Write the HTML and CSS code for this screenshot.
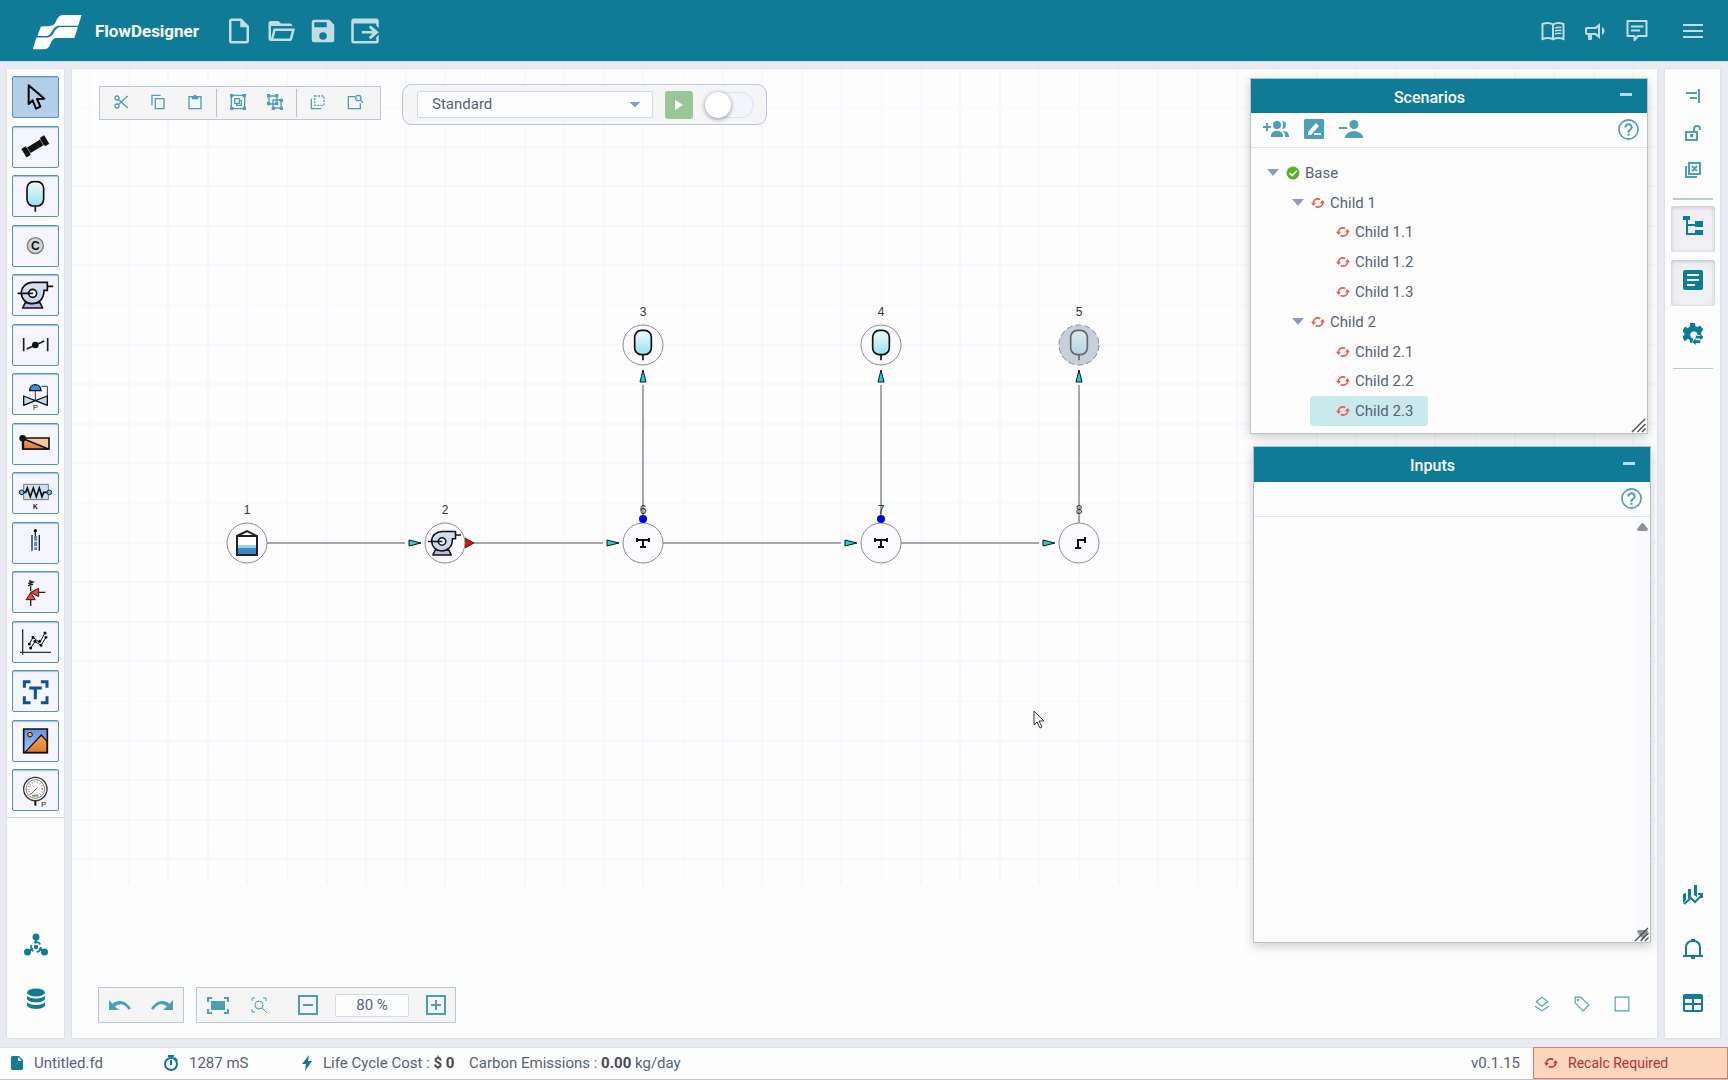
FILE: index.html
```html
<!DOCTYPE html>
<html lang="en">
<head>
<meta charset="utf-8">
<meta name="viewport" content="width=device-width, initial-scale=1">
<title>FlowDesigner</title>
<link rel="stylesheet" href="styles.css">
</head>
<body>
<svg class="sprite" aria-hidden="true">
  <defs>
    <linearGradient id="water" x1="0" y1="0" x2="0" y2="1"><stop offset="0" stop-color="#f2fcfd"/><stop offset="1" stop-color="#96e2ec"/></linearGradient>
    <linearGradient id="steel" x1="0" y1="0" x2="0" y2="1"><stop offset="0" stop-color="#d5e2f5"/><stop offset="1" stop-color="#c4d4ec"/></linearGradient>
    <linearGradient id="orange" x1="0" y1="0" x2="0" y2="1"><stop offset="0" stop-color="#f3a55c"/><stop offset="1" stop-color="#e0792a"/></linearGradient>
    <linearGradient id="sky" x1="0" y1="0" x2="0" y2="1"><stop offset="0" stop-color="#5f92e8"/><stop offset="1" stop-color="#a9c8f6"/></linearGradient>
  </defs>
  <symbol id="recalc" viewBox="0 0 24 24"><g fill="none" stroke="currentColor" stroke-width="2.8"><path d="M4 12.5C4 8 7.500 5 12 5c1.500 0 2.500.3 4 1"/><path d="M20 11.500C20 16 16.500 19 12 19c-1.500 0-2.500-.3-4-1"/></g><path fill="currentColor" d="M0 11.500h8.500L4.300 17zM15.500 12.500H24L19.700 7z"/></symbol>
  <symbol id="caret" viewBox="0 0 12 7"><path fill="#8b9dbd" d="M0 0h12L6 7z"/></symbol>
  <symbol id="help" viewBox="0 0 24 24"><path fill="currentColor" d="M11 18h2v-2h-2v2m1-16A10 10 0 0 0 2 12a10 10 0 0 0 10 10 10 10 0 0 0 10-10A10 10 0 0 0 12 2m0 18.400A8.400 8.400 0 1 1 20.400 12 8.400 8.400 0 0 1 12 20.400M12 6a4 4 0 0 0-4 4h2a2 2 0 0 1 2-2 2 2 0 0 1 2 2c0 2-3 1.750-3 5h2c0-2.250 3-2.500 3-5a4 4 0 0 0-4-4z"/></symbol>
  <symbol id="resize" viewBox="0 0 16 16"><path stroke="#4b4d55" stroke-width="1.400" d="M1 15L14 2M6.500 15L14.500 7M11 15l3.500-3.500"/></symbol>
  <symbol id="vessel" viewBox="0 0 60 96"><path stroke="#111" stroke-width="5" d="M30 76v18"/><rect x="5" y="4" width="50" height="73" rx="20" fill="url(#water)" stroke="#111" stroke-width="5"/></symbol>
  <symbol id="pump" viewBox="0 0 108 86"><path d="M24 66L16 82h60l-8-16z" fill="#bcb9ea" stroke="#111" stroke-width="5" stroke-linejoin="round"/><path d="M46 5h44v24H80C80 58 62 69 44 69A32 32 0 0 1 12 37C12 18 28 5 46 5z" fill="url(#steel)" stroke="#111" stroke-width="5"/><path d="M0 38h46M90 17h18" stroke="#111" stroke-width="5"/><circle cx="46" cy="38" r="12" fill="#fff" stroke="#111" stroke-width="5"/><path d="M30 38h17" stroke="#111" stroke-width="5"/></symbol>
  <symbol id="tee" viewBox="-14 -14 28 28"><path d="M-6-3H6M-6-5v4M6-5v4M0-3V4M-3 4h6" stroke="#111" stroke-width="2" fill="none"/></symbol>
</svg>

<header class="topbar">
  <svg class="logo" viewBox="95 42 155 110" aria-hidden="true"><path fill="#fff" d="M246 45H188C176 46 172 56 166 68C162 76 158 80 122 80L111 109H138C154 108 154 92 164 83C169 79 174 78 182 78H236ZM235 82H184C172 82 168 88 162 98C156 110 150 114 138 114H108L97 150H130C146 149 148 140 154 126C160 116 164 115 172 115H224Z"/></svg>
  <h1 class="brand">FlowDesigner</h1>
  <nav class="file-actions" aria-label="File">
    <button aria-label="New"><svg viewBox="0 0 24 24"><path d="M14 2H6C4.890 2 4 2.900 4 4V20C4 21.110 4.890 22 6 22H18C19.100 22 20 21.100 20 20V8L14 2M18 20H6V4H13V9H18V20Z"/></svg></button>
    <button aria-label="Open"><svg viewBox="0 0 24 24"><path d="M6.100,10L4,18V8H21A2,2 0 0,0 19,6H12L10,4H4A2,2 0 0,0 2,6V18A2,2 0 0,0 4,20H19C19.900,20 20.700,19.400 20.900,18.500L23.200,10H6.100M19,18H6L7.600,12H20.600L19,18Z"/></svg></button>
    <button aria-label="Save"><svg viewBox="0 0 24 24"><path d="M15,9H5V5H15M12,19A3,3 0 0,1 9,16A3,3 0 0,1 12,13A3,3 0 0,1 15,16A3,3 0 0,1 12,19M17,3H5C3.890,3 3,3.900 3,5V19A2,2 0 0,0 5,21H19A2,2 0 0,0 21,19V7L17,3Z"/></svg></button>
    <button aria-label="Export"><svg viewBox="0 0 24 24"><path d="M3 2h18a2 2 0 0 1 2 2v5.500l-2-2V6H3V20H21V17l2-2v5a2 2 0 0 1-2 2H3a2 2 0 0 1-2-2V4a2 2 0 0 1 2-2z"/><path d="M16.500 7.500L23 13l-6.500 5.500L15 17l3-3H9.500v-2H18l-3-3z"/></svg></button>
  </nav>
  <nav class="app-actions" aria-label="Application">
    <button aria-label="Manual"><svg viewBox="0 0 24 24"><path fill="none" stroke="currentColor" stroke-width="2" d="M12 5.500C9 3.800 5 3.800 1.500 5v15C5 18.800 9 18.800 12 20.300 15 18.800 19 18.800 22.500 20V5C19 3.800 15 3.800 12 5.500zV20"/><path stroke="currentColor" stroke-width="1.500" d="M14 9c2-1 4-1 6.500-.5M14 12c2-1 4-1 6.500-.5M14 15c2-1 4-1 6.500-.5"/></svg></button>
    <button aria-label="News"><svg viewBox="0 0 24 24"><path d="M12,8H4A2,2 0 0,0 2,10V14A2,2 0 0,0 4,16H5V20A1,1 0 0,0 6,21H8A1,1 0 0,0 9,20V16H12L17,20V4L12,8M15,15.600L13,14H4V10H13L15,8.400V15.600M21.500,12C21.500,13.710 20.540,15.260 19,16V8C20.530,8.750 21.500,10.300 21.500,12Z"/></svg></button>
    <button aria-label="Feedback"><svg viewBox="0 0 24 24"><path fill="none" stroke="currentColor" stroke-width="2" stroke-linejoin="round" d="M2.500 2h19v15H13l-3.500 4V17h-7z"/><path stroke="currentColor" stroke-width="2" d="M6 7.500h12.500M6 11.500h9"/></svg></button>
    <button class="menu-button" aria-label="Menu"><svg viewBox="0 0 24 24"><path d="M2,5H22V7H2V5M2,11H22V13H2V11M2,17H22V19H2V17Z"/></svg></button>
  </nav>
</header>

<main class="workspace">
  <aside class="palette">
    <div class="tools">
      <button class="tool active" aria-label="Select"><svg viewBox="3 3 135 123"><path d="M50 28V84L62 73 72 98 85 92 75 69 97 68Z" fill="none" stroke="#000" stroke-width="6" stroke-linejoin="round"/></svg></button>
      <button class="tool" aria-label="Pipe"><svg viewBox="3 3 135 123"><g transform="rotate(-31 70 64)"><path d="M40 54h60v20H40z"/><path d="M31 50h13v28H31zM96 50h13v28H96z" stroke="#111" stroke-width="2"/><path d="M47 50v28M93 50v28" stroke="#aab" stroke-width="2"/></g></svg></button>
      <button class="tool" aria-label="Vessel"><svg viewBox="3 3 135 123"><use href="#vessel" x="40" y="16" width="60" height="96"/></svg></button>
      <button class="tool" aria-label="Component"><svg viewBox="3 3 135 123"><circle cx="70" cy="65" r="24" fill="#d3d3d5" stroke="#777" stroke-width="4"/><text x="70" y="78" class="glyph-c">C</text></svg></button>
      <button class="tool" aria-label="Pump"><svg viewBox="3 3 135 123"><use href="#pump" x="16" y="20" width="108" height="86"/></svg></button>
      <button class="tool" aria-label="Valve"><svg viewBox="3 3 135 123"><path d="M35 45v40M107 45v40M44 78L97 54" stroke="#222" stroke-width="5"/><circle cx="70" cy="66" r="10"/></svg></button>
      <button class="tool" aria-label="Control valve"><svg viewBox="3 3 135 123"><path d="M88 40h18v40M70 52v31" fill="none" stroke="#333" stroke-width="3"/><path d="M53 53c0-24 34-24 34 0z" fill="#2f93e0" stroke="#111" stroke-width="4"/><path d="M35 69L70 83 35 97zM106 69L70 83l36 14z" fill="#c3d9ef" stroke="#111" stroke-width="4" stroke-linejoin="round"/><text x="70" y="111" class="glyph-p">P</text></svg></button>
      <button class="tool" aria-label="Weir"><svg viewBox="3 3 135 123"><path d="M32 48h79v33H32z" fill="#f7c8a0" stroke="#111" stroke-width="5"/><path d="M34 50L109 81H34z" fill="url(#orange)" stroke="#111" stroke-width="5"/><circle cx="32" cy="49" r="10"/></svg></button>
      <button class="tool" aria-label="Resistance"><svg viewBox="3 3 135 123"><path d="M35 37h74v46H35z" fill="#cfe0f2" stroke="#777" stroke-width="3"/><path d="M29 61h12l5-13 9 26 9-26 9 26 9-26 8 26 5-13h17" fill="none" stroke="#111" stroke-width="5"/><circle cx="29" cy="61" r="7" fill="#5cc3ee" stroke="#124" stroke-width="3"/><circle cx="112" cy="61" r="7" fill="#5cc3ee" stroke="#124" stroke-width="3"/><text x="70" y="111" class="glyph-k">K</text></svg></button>
      <button class="tool" aria-label="Orifice"><svg viewBox="3 3 135 123"><path d="M60 42v47M82 42v47M70 28v24" stroke="#222" stroke-width="4"/><circle cx="70" cy="29" r="5"/><path d="M71 45v42" stroke="#5b82d8" stroke-width="9" stroke-dasharray="14 3"/></svg></button>
      <button class="tool" aria-label="Relief valve"><svg viewBox="3 3 135 123"><path d="M56 60V46M48 44l15-4-14-3 14-4-12-4M80 64h20M56 84v21" fill="none" stroke="#222" stroke-width="4"/><path d="M56 65L42 86h28zM56 64l24-12v25z" fill="#e24a3c" stroke="#511" stroke-width="3"/></svg></button>
      <button class="tool" aria-label="Graph"><svg viewBox="3 3 135 123"><path d="M32 28v76M24 97h93" stroke="#333" stroke-width="4"/><path d="M52 72l11-20 20 16 16-29M56 84l13-19 18 11 15-24" fill="none" stroke="#111" stroke-width="3"/><path d="M52 72h0M63 52h0M83 64h0M99 39h0M56 84h0M69 64h0M87 76h0M102 52h0" stroke="#111" stroke-width="9" stroke-linecap="round"/></svg></button>
      <button class="tool" aria-label="Text"><svg viewBox="3 3 135 123"><path d="M37 49V35h14M91 35h14v14M105 83v15H91M51 98H37V83M56 54h29M70 54v29" fill="none" stroke="#0e50a0" stroke-width="9" stroke-linecap="square"/></svg></button>
      <button class="tool" aria-label="Image"><svg viewBox="3 3 135 123"><path d="M35 30h71v71H35z" fill="url(#sky)"/><path d="M38 101L88 48l18 20v33z" fill="url(#orange)" stroke="#111" stroke-width="4"/><circle cx="54" cy="47" r="7" fill="#f9b31a" stroke="#111" stroke-width="3"/><path d="M35 30h71v71H35z" fill="none" stroke="#111" stroke-width="5"/></svg></button>
      <button class="tool" aria-label="Gauge"><svg viewBox="3 3 135 123"><path d="M70 96v14" stroke="#111" stroke-width="6"/><circle cx="70" cy="60" r="35" fill="#fff" stroke="#333" stroke-width="4"/><circle cx="70" cy="60" r="28" fill="none" stroke="#444" stroke-width="2"/><circle cx="70" cy="60" r="21" fill="none" stroke="#777" stroke-width="6" stroke-dasharray="2 6"/><path d="M56 76L76 56" stroke="#c33" stroke-width="3"/><path d="M61 80h18" stroke="#6a6" stroke-width="6"/><text x="95" y="114" class="glyph-p">P</text></svg></button>
    </div>
    <div class="palette-bottom">
      <button aria-label="Fluids"><svg viewBox="0 0 24 24"><circle cx="12" cy="4" r="3.500"/><circle cx="3.500" cy="19" r="3.500"/><circle cx="20.500" cy="19" r="3.500"/><circle cx="12" cy="14" r="2.200"/><path d="M11 6h2v4.500h-2zM4 17.200l4.500-2.600 1 1.700L5 19zM20 17.200l-4.500-2.600-1 1.700L19 19z"/><circle cx="12" cy="14" r="5" fill="none" stroke="currentColor" stroke-width="1.700" stroke-dasharray="7 3.500"/></svg></button>
      <button aria-label="Database"><svg viewBox="0 0 24 24"><ellipse cx="12" cy="5.500" rx="9" ry="4"/><path d="M3 8.500c2 4 16 4 18 0v3.500c-2 4.500-16 4.500-18 0zM3 15c2 4 16 4 18 0v3.500c-2 4.500-16 4.500-18 0z"/></svg></button>
    </div>
  </aside>

  <section class="canvas" aria-label="Design sheet">
    <svg class="diagram" aria-hidden="true">
      <defs>
        <pattern id="grid" x="17" y="38" width="198" height="198" patternUnits="userSpaceOnUse"><path d="M0 0h198M0 40h198M0 79h198M0 119h198M0 158h198M0 0v198M40 0v198M79 0v198M119 0v198M158 0v198" fill="none" stroke="#f8f8fc" stroke-width="2"/></pattern>
      </defs>
      <rect width="100%" height="816" fill="url(#grid)"/>
      <g class="links">
        <path d="M195 474H333M393 474H531M591 474H769M829 474H967M571 454V316M809 454V316M1007 454V316"/>
      </g>
      <g class="arrows">
        <path d="M337 471l12 3-12 3zM535 471l12 3-12 3zM773 471l12 3-12 3zM971 471l12 3-12 3zM568 313l3-12 3 12zM806 313l3-12 3 12zM1004 313l3-12 3 12z"/>
      </g>
      <path d="M393 469l9 5-9 5z" fill="#d01515" stroke="#611" stroke-width="1"/>
      <g class="nodes">
        <circle cx="175" cy="474" r="20"/><circle cx="373" cy="474" r="20"/><circle cx="571" cy="474" r="20"/><circle cx="809" cy="474" r="20"/><circle cx="1007" cy="474" r="20"/>
        <circle cx="571" cy="276" r="20"/><circle cx="809" cy="276" r="20"/><circle class="selected" cx="1007" cy="276" r="20"/>
      </g>
      <path d="M165 467l10-5 10 5v19h-20z" fill="#fff"/><path d="M165 476h20v4h-20z" fill="#98cfe8"/><path d="M165 479h20v7h-20z" fill="#3a85cc"/>
      <path d="M165 467l10-5 10 5v19h-20zM165 467h20" fill="none" stroke="#222" stroke-width="2"/>
      <use href="#pump" x="356" y="460" width="33" height="28"/>
      <use href="#tee" x="557" y="460" width="28" height="28"/><use href="#tee" x="795" y="460" width="28" height="28"/>
      <path d="M1006 479v-8h7M1013 468v6M1003 479h6" fill="none" stroke="#111" stroke-width="2"/>
      <use href="#vessel" x="561" y="260" width="20" height="32"/><use href="#vessel" x="799" y="260" width="20" height="32"/><use href="#vessel" x="997" y="260" width="20" height="32" opacity=".55"/>
      <circle cx="571" cy="450" r="4" fill="#0202e8"/><circle cx="809" cy="450" r="4" fill="#0202e8"/>
      <g class="labels">
        <text x="175" y="445">1</text><text x="373" y="445">2</text><text x="571" y="247">3</text><text x="809" y="247">4</text><text x="1007" y="247">5</text><text x="571" y="445">6</text><text x="809" y="445">7</text><text x="1007" y="445">8</text>
      </g>
      <path d="M962 642v14l3-3 3 6 2-1-3-6h5z" fill="#fff" stroke="#333" stroke-width="1"/>
    </svg>

    <div class="float edit-bar">
      <button aria-label="Cut"><svg viewBox="0 0 24 24"><g class="line"><circle cx="6" cy="6" r="3"/><circle cx="6" cy="18" r="3"/><path d="M8 8l14 13M8 16L22 3"/></g></svg></button>
      <button aria-label="Copy"><svg viewBox="0 0 24 24"><path class="line" d="M8 7h13v15H8zM3 17V2h13"/></svg></button>
      <button aria-label="Paste"><svg viewBox="0 0 24 24"><path class="line" d="M3 4h18v18H3z"/><path d="M7 3h3a2 2 0 0 1 4 0h3v5H7z"/></svg></button>
      <span class="sep"></span>
      <button aria-label="Group"><svg viewBox="0 0 24 24"><path class="line" d="M2 2h20v20H2zM7 7h7v7H7zM14 10h3v7h-7v-3"/><path d="M0 0h5v5H0zM19 0h5v5h-5zM0 19h5v5H0zM19 19h5v5h-5z"/></svg></button>
      <button aria-label="Ungroup"><svg viewBox="0 0 24 24"><path class="line" d="M3 3h12v12H3zM9 9h12v12H9z"/><path d="M0 0h5v5H0zM12 0h5v5h-5zM0 12h5v5H0zM12 12h5v5h-5zM19 7h5v5h-5zM7 19h5v5H7zM19 19h5v5h-5z"/></svg></button>
      <span class="sep"></span>
      <button aria-label="Select area"><svg viewBox="0 0 24 24"><path class="line" stroke-dasharray="3 2" d="M7 3h14v14H7z"/><path class="line" d="M2 7v15h15"/></svg></button>
      <button aria-label="Find on sheet"><svg viewBox="0 0 24 24"><path class="line" d="M12 4H2v18h18v-8"/><circle class="line" cx="17" cy="6" r="4"/><path class="line" d="M20 9l4 4"/></svg></button>
    </div>

    <div class="float run-bar">
      <select class="mode" aria-label="Calculation mode"><option>Standard</option></select>
      <button class="run" aria-label="Run"><svg viewBox="0 0 9 12"><path d="M0 0l9 6-9 6z"/></svg></button>
      <input type="checkbox" class="switch" aria-label="Auto calculate">
    </div>

    <section class="float window scenarios">
      <header class="window-title"><h2>Scenarios</h2><button class="minimize" aria-label="Minimize scenarios"></button></header>
      <div class="window-bar">
        <button aria-label="Add scenario"><svg class="wide" viewBox="0 0 26 18"><path d="M0 6h3V3h2v3h3v2H5v3H3V8H0z"/><circle cx="14" cy="5" r="4"/><path d="M8 16c0-7 12-7 12 0v1H8zM19 1a4 4 0 0 1 0 8c1.500-2 1.500-6 0-8zM20 11c4 0 6 2 6 6h-4c0-3 0-4-2-6z"/></svg></button>
        <button aria-label="Edit scenario"><svg class="mid" viewBox="0 0 20 20"><path fill-rule="evenodd" d="M1.500 0h17A1.500 1.500 0 0 1 20 1.500v17a1.500 1.500 0 0 1-1.500 1.500h-17A1.500 1.500 0 0 1 0 18.500v-17A1.500 1.500 0 0 1 1.500 0zM4 13v3h3l8-9-3-3zM10 14v2h7v-2z"/></svg></button>
        <button aria-label="Remove scenario"><svg class="wide" viewBox="0 0 26 18"><path d="M0 7h8v2H0z"/><circle cx="15" cy="4.500" r="4.500"/><path d="M6 18c0-9 18-9 18 0z"/></svg></button>
        <button class="help-button" aria-label="Scenarios help"><svg><use href="#help"/></svg></button>
      </div>
      <ul class="tree">
        <li class="level-0"><svg class="caret"><use href="#caret"/></svg><svg class="state" viewBox="0 0 24 24"><circle cx="12" cy="12" r="11" fill="#55b322"/><path d="M6 12l4.500 4.500 8-8.500" fill="none" stroke="#fff" stroke-width="2.500"/></svg>Base</li>
        <li class="level-1"><svg class="caret"><use href="#caret"/></svg><svg class="state"><use href="#recalc"/></svg>Child 1</li>
        <li class="level-2"><svg class="state"><use href="#recalc"/></svg>Child 1.1</li>
        <li class="level-2"><svg class="state"><use href="#recalc"/></svg>Child 1.2</li>
        <li class="level-2"><svg class="state"><use href="#recalc"/></svg>Child 1.3</li>
        <li class="level-1"><svg class="caret"><use href="#caret"/></svg><svg class="state"><use href="#recalc"/></svg>Child 2</li>
        <li class="level-2"><svg class="state"><use href="#recalc"/></svg>Child 2.1</li>
        <li class="level-2"><svg class="state"><use href="#recalc"/></svg>Child 2.2</li>
        <li class="level-2 current"><svg class="state"><use href="#recalc"/></svg>Child 2.3</li>
      </ul>
      <svg class="resize"><use href="#resize"/></svg>
    </section>

    <section class="float window inputs">
      <header class="window-title"><h2>Inputs</h2><button class="minimize" aria-label="Minimize inputs"></button></header>
      <div class="window-bar"><button class="help-button" aria-label="Inputs help"><svg><use href="#help"/></svg></button></div>
      <div class="inputs-body"><div class="scroll-track"><svg viewBox="0 0 11 8"><path d="M4 1Q5.500-1 7 1L11 6Q11 8 9 8H2Q0 8 0 6z"/></svg><svg viewBox="0 0 11 8"><path d="M4 7Q5.500 9 7 7L11 2Q11 0 9 0H2Q0 0 0 2z"/></svg></div></div>
      <svg class="resize"><use href="#resize"/></svg>
    </section>

    <div class="float bottom-bars">
      <div class="bar history">
        <button aria-label="Undo"><svg viewBox="0 0 22 10"><path d="M0 0v10h10L6 6.500c5-4 10-2.500 13.500 3.200L22 8.500C17 .5 9-1 3.500 3.800z"/></svg></button>
        <button aria-label="Redo"><svg viewBox="0 0 22 10"><path d="M22 0v10H12l4-3.500C11 2.500 6 4 2.500 9.700L0 8.500C5 .5 13-1 18.500 3.800z"/></svg></button>
      </div>
      <div class="bar zoom">
        <button aria-label="Fit to view"><svg class="fit" viewBox="0 0 22 17"><path d="M4 4h14v9H4z"/><path class="line" d="M1 5V1h4M17 1h4v4M21 12v4h-4M5 16H1v-4"/></svg></button>
        <button class="zoom-area" aria-label="Zoom to area"><svg class="area" viewBox="0 0 17 17"><path class="thin" d="M1 4V1h3M12 1h3v3M1 12v3h3M11 11l5 5"/><circle class="thin" cx="8" cy="8" r="4"/></svg></button>
        <span class="sep"></span>
        <button class="zoom-out" aria-label="Zoom out"><svg class="step" viewBox="0 0 20 20"><path class="line" d="M1 1h18v18H1zM5 10h10"/></svg></button>
        <input class="zoom-level" type="text" value="80 %" aria-label="Zoom level">
        <button aria-label="Zoom in"><svg class="step" viewBox="0 0 20 20"><path class="line" d="M1 1h18v18H1zM5 10h10M10 5v10"/></svg></button>
      </div>
    </div>

    <div class="float view-options">
      <button aria-label="Layers"><svg viewBox="0 0 14 14"><path class="thin" d="M7 1l5 4-5 4-5-4zM1 9l6 4 6-4"/></svg></button>
      <button aria-label="Labels"><svg viewBox="0 0 14 14"><path class="thin" d="M1 1h5l7 7-5 5-7-7z"/><circle cx="3.500" cy="3.500" r="1"/></svg></button>
      <button aria-label="Frame"><svg viewBox="0 0 14 14"><path class="thin" d="M1 1h12v12H1z"/></svg></button>
    </div>
  </section>

  <aside class="side-panel">
    <div class="side-small">
      <button aria-label="Dock right"><svg viewBox="0 0 16 16"><path class="line" d="M14 1v14M1 5h11M5 10h7"/></svg></button>
      <button aria-label="Unlock"><svg viewBox="0 0 16 16"><path class="line" d="M1 7h11v8H1zM9 7V4c0-4 6-4 6 0v1"/><path d="M5 9h3v3H5z"/></svg></button>
      <button aria-label="Close all"><svg viewBox="0 0 16 16"><path class="line" d="M4 1h11v11H4zM1 4v11h11M7 4l5 5M12 4l-5 5"/></svg></button>
    </div>
    <div class="side-main">
      <button class="pressed" aria-label="Scenario tree"><svg viewBox="0 0 20 20"><path d="M0 0h7v4H0zM12 5h8v6h-8zM12 14h8v5h-8zM3 4h2v4h7v2H5v7h7v2H3z"/></svg></button>
      <button class="pressed" aria-label="Input list"><svg viewBox="0 0 20 20"><path fill-rule="evenodd" d="M2 0h16a2 2 0 0 1 2 2v16a2 2 0 0 1-2 2H2a2 2 0 0 1-2-2V2a2 2 0 0 1 2-2zM4 4v2h12V4zM4 9v2h12V9zM4 14v2h8v-2z"/></svg></button>
      <button aria-label="Settings"><svg viewBox="1 0 22 24"><path d="M9 0h5l.6 3.200 2 1L20 3l3.500 4-2.500 3v3h-4a4 4 0 1 0-5 4v4.500H9l-.6-3-2-1.200L3 20l-3-5 2.600-2v-2L0 9l3-5 3.300 1.300 2-1.200zM15 14h5v-2l4 3.500-4 3.500v-2h-5zM20 19h-5v-2l-4 3.500 4 3.500v-2h5z"/></svg></button>
    </div>
    <div class="side-bottom">
      <button aria-label="Results graph"><svg viewBox="0 0 20 20"><path d="M0 9l3-1v7l-3 3zM5 4h3v8l-3 2zM11 0h3v12l-3-2z"/><path d="M1 19l7-6 4 4 7-7M15 9h4v4" fill="none" stroke="currentColor" stroke-width="2"/></svg></button>
      <button aria-label="Alerts"><svg viewBox="0 0 20 20"><path d="M3 16V8.500C3 4 6 2 10 2s7 2 7 6.500V16M0 17h20" fill="none" stroke="currentColor" stroke-width="2"/><path d="M8 0h4v3H8zM8 18h4v2H8z"/></svg></button>
      <button aria-label="Data table"><svg viewBox="0 0 20 20"><path fill-rule="evenodd" d="M2 1h16a2 2 0 0 1 2 2v14a2 2 0 0 1-2 2H2a2 2 0 0 1-2-2V3a2 2 0 0 1 2-2zM2 6v4h7V6zM11 6v4h7V6zM2 12v5h7v-5zM11 12v5h7v-5z"/></svg></button>
    </div>
  </aside>
</main>

<footer class="status">
  <span class="status-item file"><svg viewBox="0 0 12 14"><path fill-rule="evenodd" d="M1.500 0H8l4 4v8.500a1.500 1.500 0 0 1-1.500 1.500h-9A1.500 1.500 0 0 1 0 12.500v-11A1.500 1.500 0 0 1 1.500 0zM7 1v4h4z"/></svg>Untitled.fd</span>
  <span class="status-item time"><svg viewBox="0 0 14 16"><circle class="line" cx="7" cy="9" r="6"/><path d="M4 0h6v2H4zM6 5h2v5H6zM11 2l3 3-1 1-3-3z"/></svg>1287 mS</span>
  <span class="status-item cost"><svg viewBox="0 0 10 16"><path d="M7 0L0 9h4L3 16l7-10H6z"/></svg><span>Life Cycle Cost : <b>$ 0</b></span></span>
  <span class="status-item emissions">Carbon Emissions : <b>0.00</b> kg/day</span>
  <span class="version">v0.1.15</span>
  <button class="recalc"><svg><use href="#recalc"/></svg>Recalc Required</button>
</footer>
</body>
</html>
```
FILE: styles.css
```css
:root {
  --teal: #0f7b96;
  --teal-soft: #4c9fb4;
  --text: #56617a;
  --edge: #bcc6dc;
  --sheet: #fdfdfd;
}

* { box-sizing: border-box; }

body {
  margin: 0;
  min-height: 100vh;
  display: flex;
  flex-direction: column;
  background: #e9ebf3;
  color: var(--text);
  font: 15px/20px Roboto, "Liberation Sans", sans-serif;
}

button {
  display: flex;
  align-items: center;
  justify-content: center;
  padding: 0;
  border: 0;
  background: none;
  color: inherit;
  font: inherit;
}

svg { display: block; flex: none; fill: currentColor; }
h1, h2, ul { margin: 0; padding: 0; }
.sprite { position: absolute; width: 0; height: 0; }
.line { fill: none; stroke: currentColor; stroke-width: 2; }
.thin { fill: none; stroke: currentColor; stroke-width: 1; }

/* Header */
.topbar {
  display: flex;
  align-items: center;
  height: 62px;
  padding: 0 23px 0 32px;
  border-bottom: 1px solid #c6dfe8;
  background: var(--teal);
  color: #c0dde4;
}
.logo { width: 51px; height: 36px; margin-top: 3px; }
.brand { margin-left: 12px; width: 129px; color: #fff; font-size: 17px; font-weight: 700; }
.file-actions, .app-actions { display: flex; }
.file-actions { gap: 12px; }
.file-actions svg { width: 30px; height: 30px; }
.app-actions { margin-left: auto; gap: 18px; }
.app-actions svg { width: 24px; height: 24px; }
.app-actions .menu-button { margin-left: 14px; }

/* Main area */
.workspace {
  flex: 1;
  display: grid;
  grid-template-columns: 57px 1fr 55px;
  gap: 8px;
  padding: 7px 8px 9px 7px;
}
.palette, .canvas, .side-panel {
  background: var(--sheet);
  box-shadow: 0 0 2px #c9ccd6;
}
.palette { display: flex; flex-direction: column; justify-content: space-between; }
.tools {
  display: flex;
  flex-direction: column;
  align-items: center;
  justify-content: space-between;
  height: 749px;
  padding: 7px 0 6px;
  border-bottom: 1px solid #d3d6de;
}
.tool {
  width: 47px;
  height: 42px;
  border: 1px solid #5c93bd;
  border-radius: 2px;
  background: #f5f5fd;
  box-shadow: inset 0 1px 1px #9cc0dc;
  color: #111;
}
.tool.active { background: #b3cee9; }
.tool svg { width: 45px; height: 41px; }
.glyph-c { font: 700 36px "Liberation Sans", sans-serif; text-anchor: middle; }
.glyph-p { font: 22px "Liberation Sans", sans-serif; text-anchor: middle; }
.glyph-k { font: 700 20px "Liberation Sans", sans-serif; text-anchor: middle; }
.palette-bottom {
  display: flex;
  flex-direction: column;
  align-items: center;
  gap: 30px;
  padding-bottom: 27px;
  color: var(--teal);
}
.palette-bottom svg { width: 24px; height: 24px; }

/* Design sheet */
.canvas { position: relative; overflow: hidden; color: var(--text); }
.diagram { position: absolute; inset: 0; width: 100%; height: 100%; }
.links { fill: none; stroke: #555; stroke-width: 1; }
.arrows { fill: #16d4e4; stroke: #111; stroke-width: 1; }
.nodes { fill: #fafaff; stroke: #8b8b94; stroke-width: 1; }
.nodes .selected { fill: #c8d0dc; stroke-dasharray: 6 3; }
.labels { fill: #333; font: 12px "Liberation Sans", sans-serif; text-anchor: middle; }

.float { position: absolute; }
.float button { color: var(--teal-soft); }
.sep { width: 1px; align-self: stretch; background: #b9bfcc; }

.edit-bar {
  top: 17px;
  left: 27px;
  display: flex;
  height: 34px;
  padding: 2px 7px 2px 2px;
  border: 1px solid var(--edge);
  background: #f5f5f6;
}
.edit-bar button { width: 37px; height: 26px; }
.edit-bar svg { width: 16px; height: 16px; }
.edit-bar .sep { margin: 0 2px 0 3px; }

.run-bar {
  top: 15px;
  left: 330px;
  display: flex;
  align-items: center;
  gap: 12px;
  height: 41px;
  padding: 0 12px 0 14px;
  border: 1px solid var(--edge);
  border-radius: 10px;
  background: #f5f5f6;
}
.mode {
  appearance: none;
  width: 236px;
  height: 27px;
  padding: 0 14px 2px;
  border: 1px solid #cfdaea;
  border-radius: 2px;
  background: var(--sheet);
  background-image: conic-gradient(from -50deg at 50% 100%, #8b9dbd 100deg, transparent 0);
  background-position: right 11px center;
  background-size: 12px 5px;
  background-repeat: no-repeat;
  color: var(--text);
  font: inherit;
}
.run { width: 28px; height: 28px; border-radius: 3px; background: #97c697; }
.float .run { color: #fff; }
.run svg { width: 8px; height: 12px; }
.switch {
  appearance: none;
  width: 49px;
  height: 26px;
  margin: 0;
  border: 1px solid #e0e0ea;
  border-radius: 13px;
  background: #f4f4fc;
}
.switch::before {
  content: "";
  display: block;
  width: 26px;
  height: 26px;
  margin: -1px;
  border-radius: 50%;
  background: #fff;
  box-shadow: 0 1px 4px #8a8a94;
}

/* Floating windows */
.window {
  width: 398px;
  display: flex;
  flex-direction: column;
  border: 1px solid #b4c3cd;
  background: var(--sheet);
  box-shadow: 0 3px 10px #00000033;
}
.window-title {
  display: flex;
  align-items: center;
  height: 34px;
  flex: none;
  padding: 0 15px 0 0;
  background: var(--teal);
}
.window-title h2 { flex: 1; padding: 3px 12px 0 0; text-align: center; color: #fff; font-size: 16px; font-weight: 500; }
.minimize { width: 12px; height: 3px; margin-bottom: 3px; }
.float .window-title .minimize { background: #b9dbe4; }
.window-bar {
  display: flex;
  align-items: center;
  gap: 15px;
  height: 35px;
  flex: none;
  padding: 0 6px 2px 12px;
  border-bottom: 1px solid #e2e4ec;
}
.wide { width: 26px; height: 18px; }
.mid { width: 20px; height: 20px; }
.help-button { margin-left: auto; }
.help-button svg { width: 25px; height: 25px; }
.resize { position: absolute; right: 0; bottom: 0; width: 16px; height: 16px; }

.scenarios { top: 9px; right: 9px; height: 356px; }
.tree {
  display: grid;
  grid-auto-rows: 1fr;
  height: 268px;
  margin-top: 10px;
  list-style: none;
}
.tree li { display: flex; align-items: center; justify-self: start; border-radius: 4px; padding-right: 15px; }
.tree .level-0 { margin-left: 16px; }
.tree .level-1 { margin-left: 41px; }
.tree .level-2 { margin-left: 59px; padding-left: 26px; }
.caret { width: 12px; height: 7px; margin-right: 7px; }
.state { width: 14px; height: 14px; margin-right: 5px; color: #ee5a4e; }
.current { background: #c9e9ec; }

.inputs { top: 377px; right: 6px; height: 497px; }
.inputs .window-title { height: 35px; }
.inputs-body { flex: 1; display: flex; justify-content: flex-end; }
.scroll-track {
  display: flex;
  flex-direction: column;
  align-items: center;
  justify-content: space-between;
  width: 15px;
  padding: 6px 0 4px;
  background: #fafafc;
  color: #8e929d;
}
.scroll-track svg { width: 11px; height: 8px; }

/* Bottom controls */
.bottom-bars { left: 26px; bottom: 15px; display: flex; gap: 12px; }
.bar { display: flex; align-items: center; height: 36px; border: 1px solid var(--edge); background: #f5f5f6; }
.history { width: 86px; justify-content: center; gap: 20px; }
.history svg { width: 22px; height: 10px; }
.zoom { padding: 2px 10px; width: 260px; }
.zoom-area { margin: 0 13px 0 22px; }
.zoom-out { margin: 0 17px; }
.zoom-level + button { margin-left: 17px; }
.fit { width: 22px; height: 17px; }
.area { width: 17px; height: 17px; }
.step { width: 20px; height: 20px; }
.zoom-level {
  width: 74px;
  height: 23px;
  padding: 0;
  border: 1px solid #d2daea;
  border-radius: 2px;
  background: var(--sheet);
  color: var(--text);
  font: inherit;
  text-align: center;
}
.view-options { right: 27px; bottom: 26px; display: flex; gap: 24px; }
.view-options svg { width: 16px; height: 16px; }

/* Right panel */
.side-panel { display: flex; flex-direction: column; align-items: center; color: var(--teal); }
.side-small {
  display: flex;
  flex-direction: column;
  align-items: center;
  gap: 21px;
  width: 40px;
  padding: 19px 0 20px;
  border-bottom: 2px solid #b7cbdc;
  color: var(--teal-soft);
}
.side-small svg { width: 16px; height: 16px; }
.side-main {
  display: flex;
  flex-direction: column;
  align-items: center;
  gap: 8px;
  width: 40px;
  padding: 6px 0 8px;
  border-bottom: 1px solid #b7cbdc;
}
.side-main button { width: 44px; height: 46px; padding-bottom: 7px; border-radius: 3px; }
.side-main svg { width: 20px; height: 22px; }
.pressed { background: #f0f0f4; box-shadow: inset 0 1px 4px #b8b8c0; }
.side-bottom {
  display: flex;
  flex-direction: column;
  gap: 34px;
  margin-top: auto;
  padding-bottom: 25px;
}
.side-bottom svg { width: 20px; height: 20px; }

/* Status bar */
.status {
  display: flex;
  align-items: center;
  height: 33px;
  padding: 0 0 1px 11px;
  border-top: 1px solid #dfe1e8;
  border-bottom: 1px solid #c4c4c8;
  background: var(--sheet);
}
.status svg { color: var(--teal); }
.status b { color: #444a58; font-weight: 700; }
.status-item { display: flex; align-items: center; gap: 11px; white-space: pre; }
.file { width: 153px; }
.file svg { width: 12px; height: 14px; }
.time { width: 138px; }
.time svg { width: 14px; height: 16px; }
.cost { width: 167px; }
.cost svg { width: 10px; height: 16px; }
.emissions { gap: 0; }
.version { margin-left: auto; margin-right: 13px; }
.recalc {
  justify-content: flex-start;
  gap: 10px;
  width: 195px;
  height: 32px;
  padding-left: 10px;
  border: 1px solid #d77c70;
  background: #fdd7bb;
  color: #b5303a;
}
.status .recalc svg { width: 14px; height: 14px; color: #c43a3a; }
.status .recalc { font-size: 14px; }
```
